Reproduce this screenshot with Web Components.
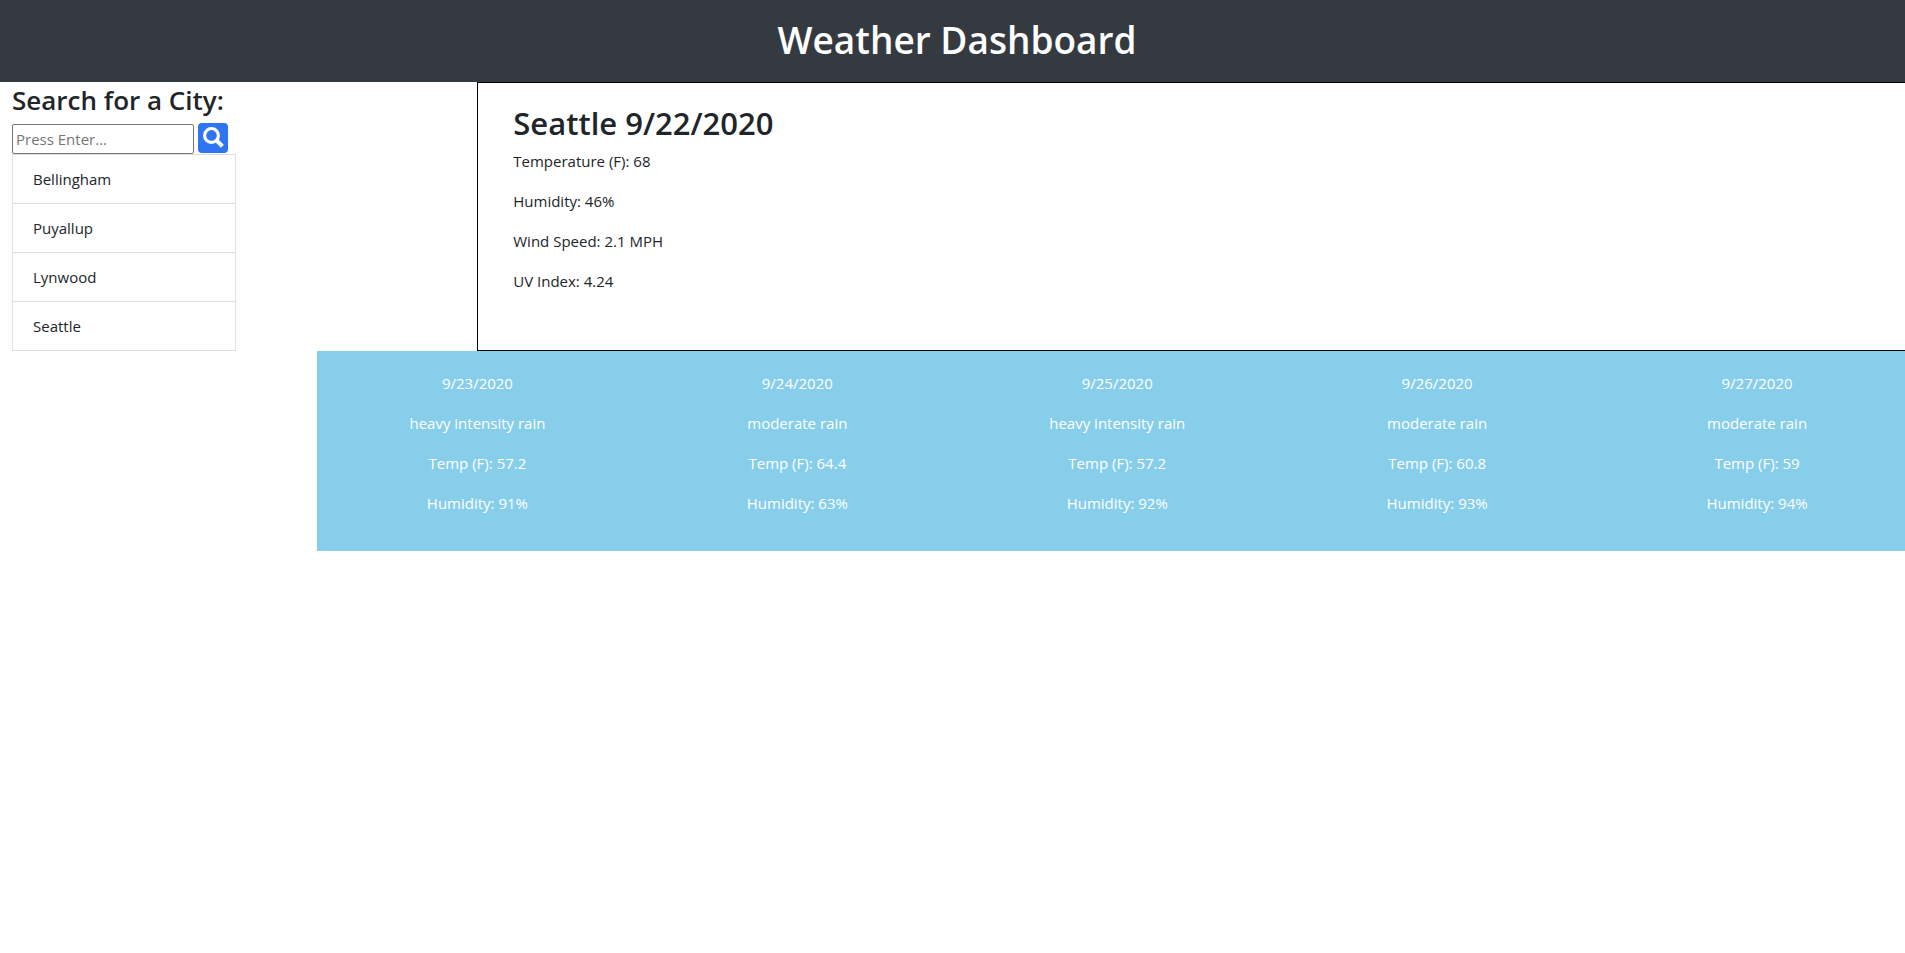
<!DOCTYPE html>
<html lang="en">
<head>
<meta charset="utf-8">
<meta name="viewport" content="width=device-width, initial-scale=1">
<title>Weather Dashboard</title>
<style>
  body {
    margin: 0;
    background: #fff;
    color: #212529;
    font-family: "Open Sans", "Noto Sans", sans-serif;
    font-size: 15px;
    line-height: 24px;
  }
</style>
</head>
<body>
<weather-app></weather-app>

<script>
  class WeatherHeader extends HTMLElement {
    constructor() {
      super();
      this.attachShadow({ mode: "open" }).innerHTML = `
        <style>
          :host { display: block; background: #343a40; color: #fff; padding: 16px 0 18px 9px; text-align: center; }
          h1 { margin: 0; font-size: 37px; line-height: 48px; font-weight: 600; }
        </style>
        <header><h1><slot></slot></h1></header>`;
    }
  }
  customElements.define("weather-header", WeatherHeader);

  class CitySearch extends HTMLElement {
    constructor() {
      super();
      this.attachShadow({ mode: "open" }).innerHTML = `
        <style>
          :host { display: block; width: 224px; }
          h2 { margin: 0 0 4px; font-size: 26px; line-height: 37px; font-weight: 600; white-space: nowrap; }
          form { display: flex; align-items: flex-start; gap: 4px; margin: 0; }
          input {
            box-sizing: border-box; width: 182px; height: 30px; margin: 1px 0 0; padding: 1px 3px;
            border: 1px solid #767676; border-radius: 2px; background: #fff;
            color: inherit; font: inherit;
          }
          input::placeholder { color: #757575; opacity: 1; }
          button {
            width: 30px; height: 30px; padding: 0; border: 0; border-radius: 4px;
            background: #2f75f3; cursor: pointer; flex: none;
          }
          svg { display: block; }
        </style>
        <h2><label for="city">Search for a City:</label></h2>
        <form onsubmit="return false">
          <input id="city" type="text" placeholder="Press Enter...">
          <button type="submit" aria-label="Search">
            <svg width="30" height="30" viewBox="0 0 30 30" fill="none" stroke="#fff" aria-hidden="true">
              <circle cx="13.5" cy="12.4" r="6.9" stroke-width="3.2"/>
              <path d="M18.3 17.2 L24.4 23.2" stroke-width="4"/>
            </svg>
          </button>
        </form>`;
    }
  }
  customElements.define("city-search", CitySearch);

  class CityHistory extends HTMLElement {
    constructor() {
      super();
      this.attachShadow({ mode: "open" }).innerHTML = `
        <style>
          :host { display: block; box-sizing: border-box; width: 224px; border: 1px solid #dfdfdf; border-bottom: 0; }
          ul { margin: 0; padding: 0; list-style: none; }
          li { padding: 12px 20px; border-bottom: 1px solid #dfdfdf; }
        </style>
        <ul></ul>`;
    }
    connectedCallback() {
      const list = this.shadowRoot.querySelector("ul");
      list.replaceChildren(...this.getAttribute("cities").split(",").map(name => {
        const item = document.createElement("li");
        item.textContent = name;
        return item;
      }));
    }
  }
  customElements.define("city-history", CityHistory);

  class CurrentWeather extends HTMLElement {
    constructor() {
      super();
      this.attachShadow({ mode: "open" }).innerHTML = `
        <style>
          :host { display: block; box-sizing: border-box; border: 1px solid #000; padding: 20px 35px; }
          h2 { margin: 0 0 6px; font-size: 31px; line-height: 40px; font-weight: 600; }
          ::slotted(p) { margin: 0 0 16px; }
        </style>
        <h2><slot name="title"></slot></h2>
        <slot></slot>`;
    }
  }
  customElements.define("current-weather", CurrentWeather);

  class ForecastDay extends HTMLElement {
    constructor() {
      super();
      this.attachShadow({ mode: "open" }).innerHTML = `
        <style>
          :host { display: block; padding: 20px 15px; text-align: center; }
          p { margin: 0 0 16px; }
        </style>
        <p class="date"></p>
        <p class="sky"></p>
        <p>Temp (F): <span class="temp"></span></p>
        <p>Humidity: <span class="humidity"></span></p>`;
    }
    connectedCallback() {
      for (const key of ["date", "sky", "temp", "humidity"]) {
        this.shadowRoot.querySelector("." + key).textContent = this.getAttribute(key);
      }
    }
  }
  customElements.define("forecast-day", ForecastDay);

  class ForecastStrip extends HTMLElement {
    constructor() {
      super();
      this.attachShadow({ mode: "open" }).innerHTML = `
        <style>
          :host { display: grid; grid-template-columns: repeat(5, minmax(0, 1fr)); background: #87ceeb; color: #fff; }
        </style>
        <slot></slot>`;
    }
  }
  customElements.define("forecast-strip", ForecastStrip);

  class WeatherApp extends HTMLElement {
    constructor() {
      super();
      this.attachShadow({ mode: "open" }).innerHTML = `
        <style>
          :host { display: block; overflow-x: clip; }
          .today { display: grid; grid-template-columns: 1fr 3fr; margin-right: -4px; }
          aside { padding-left: 12px; }
          forecast-strip { margin-left: calc(100% / 6); margin-right: -12px; }
        </style>
        <weather-header>Weather Dashboard</weather-header>
        <main>
          <div class="today">
            <aside>
              <city-search></city-search>
              <city-history cities="Bellingham,Puyallup,Lynwood,Seattle"></city-history>
            </aside>
            <current-weather>
              <span slot="title">Seattle 9/22/2020</span>
              <p>Temperature (F): 68</p>
              <p>Humidity: 46%</p>
              <p>Wind Speed: 2.1 MPH</p>
              <p>UV Index: 4.24</p>
            </current-weather>
          </div>
          <forecast-strip>
            <forecast-day date="9/23/2020" sky="heavy intensity rain" temp="57.2" humidity="91%"></forecast-day>
            <forecast-day date="9/24/2020" sky="moderate rain" temp="64.4" humidity="63%"></forecast-day>
            <forecast-day date="9/25/2020" sky="heavy intensity rain" temp="57.2" humidity="92%"></forecast-day>
            <forecast-day date="9/26/2020" sky="moderate rain" temp="60.8" humidity="93%"></forecast-day>
            <forecast-day date="9/27/2020" sky="moderate rain" temp="59" humidity="94%"></forecast-day>
          </forecast-strip>
        </main>`;
    }
  }
  customElements.define("weather-app", WeatherApp);
</script>
</body>
</html>
